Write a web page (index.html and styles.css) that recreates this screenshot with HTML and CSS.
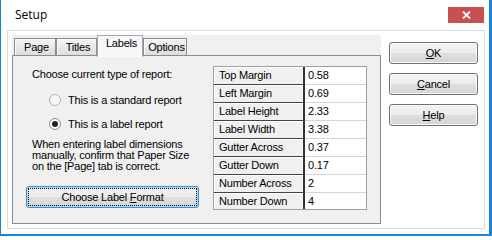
FILE: index.html
```html
<!DOCTYPE html>
<html>
<head>
<meta charset="utf-8">
<title>Setup</title>
<link rel="stylesheet" href="styles.css">
</head>
<body>
<div class="window">
  <div class="titlebar">
    <span class="title">Setup</span>
    <div class="close">
      <svg width="9" height="8" viewBox="0 0 9 8"><path d="M1 0.5 L8 7.5 M8 0.5 L1 7.5" stroke="#fff" stroke-width="1.8" fill="none"/></svg>
    </div>
  </div>
  <div class="client">
    <div class="frame">
      <div class="tabctl">
        <div class="tabs">
          <div class="tab t-page">Page</div>
          <div class="tab t-titles">Titles</div>
          <div class="tab t-labels selected">Labels</div>
          <div class="tab t-options">Options</div>
        </div>
        <div class="panel">
          <div class="leftcol">
            <div class="prompt">Choose current type of report:</div>
            <div class="radio r1">
              <svg width="12" height="12" viewBox="0 0 12 12"><circle cx="6" cy="6" r="5.5" fill="#f7f7f7" stroke="#b1b1b1"/></svg>
              <span>This is a standard report</span>
            </div>
            <div class="radio r2">
              <svg width="12" height="12" viewBox="0 0 12 12"><circle cx="6" cy="6" r="5.5" fill="#fdfdfd" stroke="#8a8a8a"/><circle cx="6" cy="6" r="3" fill="#222"/></svg>
              <span>This is a label report</span>
            </div>
            <p class="note">When entering label dimensions<br>manually, confirm that Paper Size<br>on the [Page] tab is correct.</p>
            <div class="btn focus">Choose Label&nbsp;<u>F</u>ormat</div>
          </div>
          <div class="grid">
            <div class="row"><div class="hcell">Top Margin</div><div class="vcell">0.58</div></div>
            <div class="row"><div class="hcell">Left Margin</div><div class="vcell">0.69</div></div>
            <div class="row"><div class="hcell">Label Height</div><div class="vcell">2.33</div></div>
            <div class="row"><div class="hcell">Label Width</div><div class="vcell">3.38</div></div>
            <div class="row"><div class="hcell">Gutter Across</div><div class="vcell">0.37</div></div>
            <div class="row"><div class="hcell">Gutter Down</div><div class="vcell">0.17</div></div>
            <div class="row"><div class="hcell">Number Across</div><div class="vcell">2</div></div>
            <div class="row"><div class="hcell">Number Down</div><div class="vcell">4</div></div>
          </div>
        </div>
      </div>
      <div class="buttons">
        <div class="btn side"><u>O</u>K</div>
        <div class="btn side"><u>C</u>ancel</div>
        <div class="btn side"><u>H</u>elp</div>
      </div>
    </div>
  </div>
</div>
</body>
</html>
```

FILE: styles.css
```css
html, body {
  margin: 0;
  padding: 0;
}
body {
  width: 492px;
  height: 236px;
  overflow: hidden;
  background: #fff;
  font-family: "Liberation Sans", Arial, sans-serif;
  font-size: 11px;
  letter-spacing: -0.2px;
  color: #000;
}
.window {
  box-sizing: border-box;
  width: 492px;
  height: 236px;
  border-left: 1px solid #1883d7;
  border-right: 3px solid #1883d7;
  border-bottom: 2px solid #1883d7;
  background: #fff;
  display: flex;
  flex-direction: column;
}
.titlebar {
  height: 30px;
  flex: none;
  display: flex;
  align-items: flex-start;
  justify-content: space-between;
}
.title {
  font-family: "Open Sans", sans-serif;
  font-size: 12px;
  letter-spacing: 0;
  line-height: 16px;
  margin: 7px 0 0 14px;
  color: #000;
}
.close {
  width: 36px;
  height: 16px;
  margin: 7px 5px 0 0;
  background: #c75050;
  display: flex;
  align-items: center;
  justify-content: center;
}
.close svg { display: block; }
.client {
  flex: 1;
  display: flex;
  padding: 0 4px 5px 6px;
}
.frame {
  flex: 1;
  display: flex;
  border: 1px solid #dadada;
  padding: 4px 6px 4px 4px;
  gap: 8px;
}
.tabctl {
  width: 369px;
  height: 189px;
  flex: none;
  background: #f0f0f0;
  display: flex;
  flex-direction: column;
}
.tabs {
  height: 20px;
  flex: none;
  display: flex;
  align-items: flex-end;
  padding-left: 2px;
  position: relative;
  z-index: 1;
}
.tab {
  box-sizing: border-box;
  height: 17px;
  border: 1px solid #898c95;
  border-bottom: none;
  background: linear-gradient(#f4f4f4, #dedede);
  box-shadow: inset 1px 1px 0 #fcfcfc;
  line-height: 13px;
  padding-top: 2px;
  padding-left: 3px;
  text-align: center;
  white-space: nowrap;
}
.t-page { width: 42px; }
.t-titles { width: 41px; }
.t-labels { width: 46px; }
.t-options { width: 44px; }
.tab.selected {
  height: 22px;
  margin-bottom: -2px;
  padding-top: 1px;
  background: #f8f8f8;
  box-shadow: none;
  border-color: #a6a8ae;
}
.panel {
  flex: 1;
  box-sizing: border-box;
  border: 1px solid #898c95;
  background: #f0f0f0;
  display: flex;
  align-items: flex-start;
}
.leftcol {
  width: 200px;
  box-sizing: border-box;
  flex: none;
  padding: 12px 0 0 19px;
}
.prompt {
  height: 13px;
  line-height: 13px;
  white-space: nowrap;
}
.radio {
  display: flex;
  align-items: center;
  height: 12px;
  line-height: 12px;
  margin-left: 17px;
  white-space: nowrap;
}
.radio svg {
  display: block;
  flex: none;
  margin-right: 7px;
}
.r1 { margin-top: 13px; }
.r2 { margin-top: 12px; }
.note {
  margin: 9px 0 0;
  line-height: 11px;
  white-space: nowrap;
}
.btn {
  box-sizing: border-box;
  height: 22px;
  border: 1px solid #707070;
  border-radius: 3px;
  background: linear-gradient(#f3f3f3 0%, #ececec 50%, #dfdfdf 50%, #d5d5d5 100%);
  box-shadow: inset 0 0 0 1px #fbfbfb;
  display: flex;
  align-items: center;
  justify-content: center;
  line-height: 13px;
  white-space: nowrap;
}
.btn u { text-underline-offset: 1px; }
.btn.focus {
  position: relative;
  width: 173px;
  margin: 14px 0 0 -6px;
  border-color: #3c8fd6;
  box-shadow: inset 0 0 0 1px #a8dcf8;
}
.btn.focus::after {
  content: "";
  position: absolute;
  top: 1px;
  left: 1px;
  right: 1px;
  bottom: 1px;
  border: 1px dotted #000;
}
.grid {
  box-sizing: border-box;
  width: 154px;
  height: 144px;
  margin-top: 10px;
  border: 1px solid #a0a0a0;
  background: #fff;
  overflow: hidden;
  flex: none;
}
.row {
  display: flex;
  height: 18px;
}
.hcell {
  box-sizing: border-box;
  width: 91px;
  height: 18px;
  flex: none;
  background: #f0f0f0;
  border-right: 2px solid #333;
  border-bottom: 1px solid #444;
  box-shadow: inset 1px 1px 0 #fff;
  padding-left: 5px;
  line-height: 17px;
  white-space: nowrap;
}
.vcell {
  box-sizing: border-box;
  flex: 1;
  height: 18px;
  background: #fff;
  border-bottom: 1px solid #d6d6d6;
  padding-left: 3px;
  line-height: 17px;
}
.buttons {
  width: 89px;
  flex: none;
  display: flex;
  flex-direction: column;
  gap: 9px;
  padding-top: 7px;
}
```
